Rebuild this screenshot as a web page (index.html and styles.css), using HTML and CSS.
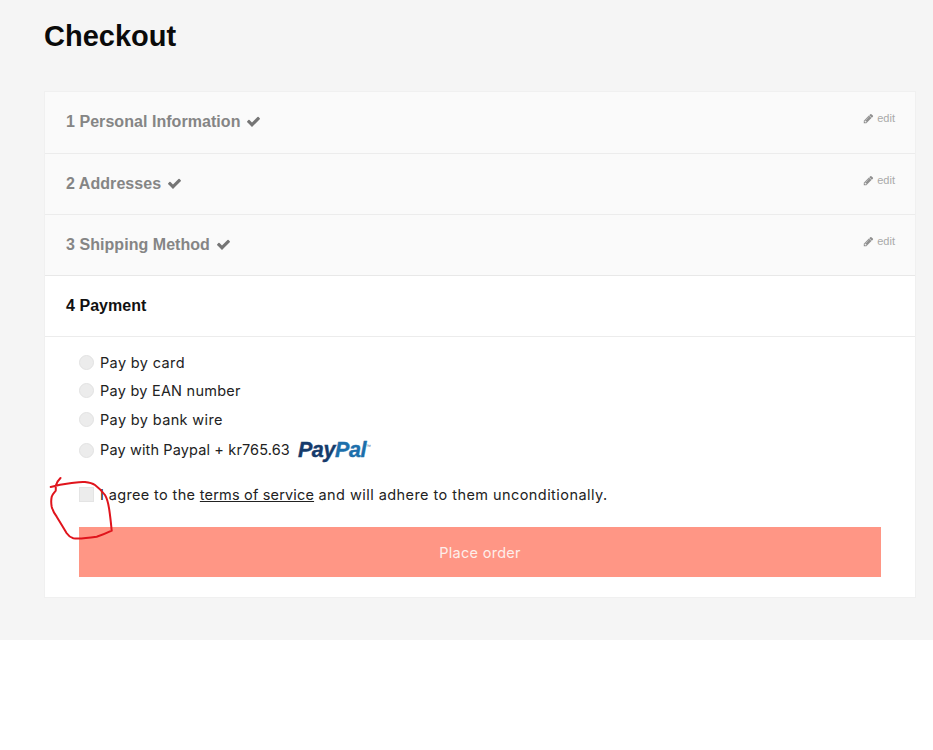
FILE: index.html
```html
<!DOCTYPE html>
<html lang="en">
<head>
<meta charset="utf-8">
<title>Checkout</title>
<link rel="stylesheet" href="styles.css">
</head>
<body>
<main class="page">
  <h1 class="title">Checkout</h1>
  <div class="steps">
    <section class="step done">
      <h2 class="step-title">1 Personal Information
        <svg class="check" viewBox="0 0 1792 1792"><path d="M1671 566q0 40-28 68l-724 724-136 136q-28 28-68 28t-68-28l-136-136-362-362q-28-28-28-68t28-68l136-136q28-28 68-28t68 28l294 295 656-657q28-28 68-28t68 28l136 136q28 28 28 68z"/></svg>
      </h2>
      <a class="edit"><svg class="pencil" viewBox="0 0 1792 1792"><path d="M491 1536l91-91-235-235-91 91v107h128v128h107zm523-928q0-22-22-22-10 0-17 7l-542 542q-7 7-7 17 0 22 22 22 10 0 17-7l542-542q7-7 7-17zm-54-192l416 416-832 832h-416v-416zm683 96q0 53-37 90l-166 166-416-416 166-165q36-38 90-38 53 0 91 38l235 234q37 39 37 91z"/></svg>edit</a>
    </section>
    <section class="step done">
      <h2 class="step-title">2 Addresses
        <svg class="check" viewBox="0 0 1792 1792"><path d="M1671 566q0 40-28 68l-724 724-136 136q-28 28-68 28t-68-28l-136-136-362-362q-28-28-28-68t28-68l136-136q28-28 68-28t68 28l294 295 656-657q28-28 68-28t68 28l136 136q28 28 28 68z"/></svg>
      </h2>
      <a class="edit"><svg class="pencil" viewBox="0 0 1792 1792"><path d="M491 1536l91-91-235-235-91 91v107h128v128h107zm523-928q0-22-22-22-10 0-17 7l-542 542q-7 7-7 17 0 22 22 22 10 0 17-7l542-542q7-7 7-17zm-54-192l416 416-832 832h-416v-416zm683 96q0 53-37 90l-166 166-416-416 166-165q36-38 90-38 53 0 91 38l235 234q37 39 37 91z"/></svg>edit</a>
    </section>
    <section class="step done">
      <h2 class="step-title">3 Shipping Method
        <svg class="check" viewBox="0 0 1792 1792"><path d="M1671 566q0 40-28 68l-724 724-136 136q-28 28-68 28t-68-28l-136-136-362-362q-28-28-28-68t28-68l136-136q28-28 68-28t68 28l294 295 656-657q28-28 68-28t68 28l136 136q28 28 28 68z"/></svg>
      </h2>
      <a class="edit"><svg class="pencil" viewBox="0 0 1792 1792"><path d="M491 1536l91-91-235-235-91 91v107h128v128h107zm523-928q0-22-22-22-10 0-17 7l-542 542q-7 7-7 17 0 22 22 22 10 0 17-7l542-542q7-7 7-17zm-54-192l416 416-832 832h-416v-416zm683 96q0 53-37 90l-166 166-416-416 166-165q36-38 90-38 53 0 91 38l235 234q37 39 37 91z"/></svg>edit</a>
    </section>
    <section class="step current">
      <h2 class="step-title">4 Payment</h2>
    </section>
    <section class="payment">
      <ul class="options">
        <li class="option"><span class="radio"></span>Pay by card</li>
        <li class="option option-ean"><span class="radio"></span>Pay by EAN number</li>
        <li class="option"><span class="radio"></span>Pay by bank wire</li>
        <li class="option option-paypal"><span class="radio"></span>Pay with Paypal + kr765.63<span class="paypal"><span class="pay-a">Pay</span><span class="pay-b">Pal</span><span class="pay-tm">™</span></span></li>
      </ul>
      <p class="terms"><span class="checkbox"></span>I agree to the&nbsp;<a class="tos">terms of service</a>&nbsp;<span class="terms-rest">and will adhere to them unconditionally.</span></p>
      <button class="place">Place order</button>
    </section>
  </div>
</main>
<svg class="scribble" viewBox="0 0 933 750"><path d="M50.7 487 C58 485 64 484 70 483.3 C76 482.5 80 481.5 85 482 C89 482.5 92 483 95 485 C99 488 102 491 105 495 C108 500 108.5 505 109.3 510 C110.5 518 111 524 111.7 530.7 C107 533 102 535 96.7 536.7 C88 538 80 539 73.3 538.3 C70.5 537.5 68.5 536 66.7 533.3 C63 527 60 522 56.7 516.7 C54 513 52.5 510 51.7 506.7 C51 503 51 500 51.7 496.7 C52.5 494 54.5 492.5 55.7 490.7 C56 488 55.5 487 56 485 C57 482 58.5 480 60.5 478"/></svg>
</body>
</html>
```

FILE: styles.css
```css
* {
  box-sizing: border-box;
}

body {
  margin: 0;
  background: #fff;
  font-family: "Inter", "Liberation Sans", sans-serif;
  color: #222;
}

.page {
  background: #f5f5f5;
  height: 640px;
  padding: 18px 17px 0 44px;
}

.title {
  margin: 0 0 37px;
  height: 36px;
  font: bold 29px/36px "Liberation Sans", sans-serif;
  color: #0a0a0a;
}

.steps {
  background: #fff;
  border: 1px solid #f0f0f0;
}

.step {
  display: flex;
  justify-content: space-between;
  height: 61px;
  padding: 0 20px 0 21px;
  border-bottom: 1px solid #ececec;
}

.step:first-child {
  height: 62px;
  padding-bottom: 1px;
}

.step.done {
  background: #fafafa;
}

.step.current {
  background: #fff;
  border-top: 1px solid #e8e8e8;
  margin-top: -1px;
  height: 62px;
}

.step-title {
  margin: 0;
  display: flex;
  align-items: center;
  gap: 6px;
  font: bold 16px "Liberation Sans", sans-serif;
  letter-spacing: 0.05px;
  color: #858585;
}

.current .step-title {
  color: #111;
}

.check {
  width: 15px;
  height: 15px;
  margin-bottom: 2px;
  fill: #757575;
}

.edit {
  display: flex;
  align-items: center;
  gap: 3px;
  height: 14px;
  margin-top: 19px;
  font: 11px "Liberation Sans", sans-serif;
  color: #a9a9a9;
}

.pencil {
  width: 11px;
  height: 11px;
  fill: #8f8f8f;
}

.payment {
  padding: 11px 34px 20px;
}

.options {
  list-style: none;
  margin: 0;
  padding: 0;
}

.option {
  display: flex;
  align-items: center;
  height: 28.5px;
  font-size: 14.5px;
  letter-spacing: 0.36px;
  color: #222;
}

.option-ean {
  letter-spacing: 0.24px;
}

.option-paypal {
  margin-top: 2px;
  letter-spacing: 0.13px;
}

.option-paypal .radio {
  margin-top: 2px;
}

.radio {
  width: 15px;
  height: 15px;
  margin-right: 6px;
  border-radius: 50%;
  background: #ececec;
  border: 1px solid #e2e2e2;
}

.paypal {
  margin-left: 8px;
  margin-top: 1px;
  font: italic bold 21.5px "Liberation Sans", sans-serif;
  letter-spacing: -0.4px;
  -webkit-text-stroke: 0.4px currentColor;
}

.pay-a {
  color: #153b6b;
}

.pay-b {
  color: #1c6fab;
}

.pay-tm {
  position: relative;
  top: -9px;
  font-size: 5px;
  font-style: normal;
  font-weight: normal;
  -webkit-text-stroke: 0;
  color: #4b6f93;
}

.terms {
  display: flex;
  align-items: center;
  margin: 20px 0 23px;
  height: 20px;
  font-size: 14.5px;
  letter-spacing: 0.36px;
  color: #222;
}

.checkbox {
  width: 15px;
  height: 15px;
  margin-right: 6px;
  background: #ececec;
  border: 1px solid #e4e4e4;
}

.tos {
  text-decoration: underline;
  letter-spacing: 0.17px;
}

.terms-rest {
  letter-spacing: 0.44px;
}

.place {
  display: block;
  width: 100%;
  height: 50px;
  border: 0;
  background: #ff9685;
  color: #fdeeea;
  font: 400 14.5px "Inter", sans-serif;
  letter-spacing: 0.3px;
}

.scribble {
  position: absolute;
  left: 0;
  top: 0;
  width: 933px;
  height: 750px;
  pointer-events: none;
  fill: none;
  stroke: #e0141c;
  stroke-width: 2;
  stroke-linecap: round;
}
```
